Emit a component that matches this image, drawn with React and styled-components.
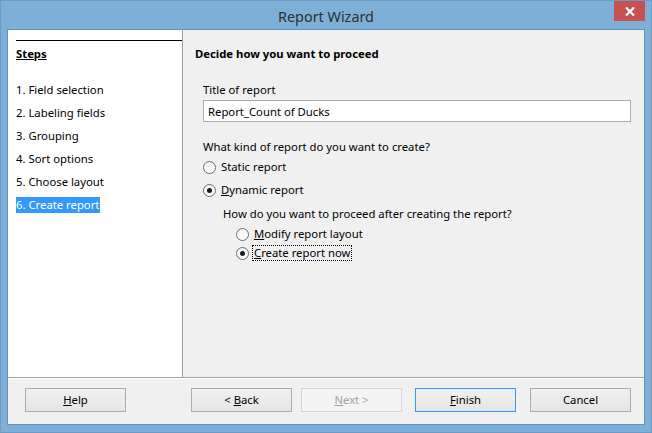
import React from "react";
import styled, { createGlobalStyle } from "styled-components";

const GlobalStyle = createGlobalStyle`
  html, body {
    margin: 0;
    padding: 0;
    background: #7dafd7;
  }
  body {
    font-family: "Noto Sans", "Open Sans", sans-serif;
    font-size: 11.3px;
    color: #000;
  }
`;

const steps = [
  "1. Field selection",
  "2. Labeling fields",
  "3. Grouping",
  "4. Sort options",
  "5. Choose layout",
  "6. Create report",
];

const Window = styled.div`
  box-sizing: border-box;
  width: 652px;
  height: 433px;
  background: #7dafd7;
  border: 1px solid #6b9cc8;
  padding: 0 6px 7px 6px;
  display: flex;
  flex-direction: column;
`;

const TitleBar = styled.div`
  height: 28px;
  display: grid;
  grid-template-columns: 1fr auto 1fr;
  align-items: start;
`;

const Title = styled.div`
  grid-column: 2;
  font-size: 14.4px;
  line-height: 15px;
  padding-top: 8px;
  color: #303030;
`;

const CloseButton = styled.div`
  grid-column: 3;
  justify-self: end;
  width: 31px;
  height: 20px;
  background: #c75050;
  display: flex;
  align-items: center;
  justify-content: center;
`;

const Client = styled.div`
  flex: 1;
  border: 1px solid #6592bd;
  background: #f0f0f0;
  display: flex;
  flex-direction: column;
`;

const Main = styled.div`
  flex: 1;
  display: flex;
  border-bottom: 1px solid #a0a0a0;
  box-shadow: 0 1px 0 #ffffff;
`;

const StepsPanel = styled.div`
  width: 166px;
  background: #fff;
  border-right: 1px solid #a0a0a0;
  padding: 10px 0 0 8px;
`;

const StepsRule = styled.div`
  height: 1px;
  background: #000;
`;

const StepsHeading = styled.div`
  font-weight: bold;
  text-decoration: underline;
  line-height: 16px;
  margin: 5px 0 20px 0;
`;

const StepList = styled.div`
  display: flex;
  flex-direction: column;
  align-items: flex-start;
  gap: 7px;
`;

const Step = styled.div`
  line-height: 16px;
  padding-right: 1px;
  background: ${(p) => (p.$active ? "#3399ff" : "transparent")};
  color: ${(p) => (p.$active ? "#fff" : "#000")};
`;

const Content = styled.div`
  flex: 1;
  padding: 16px 13px 0 12px;
  display: flex;
  flex-direction: column;
  align-items: flex-start;
`;

const Heading = styled.div`
  font-weight: bold;
  line-height: 16px;
  margin-bottom: 20px;
`;

const Label = styled.div`
  line-height: 16px;
  margin-left: ${(p) => p.$indent || 8}px;
  margin-top: ${(p) => p.$top || 0}px;
`;

const TextField = styled.div`
  box-sizing: border-box;
  align-self: stretch;
  margin: 2px 0 0 8px;
  height: 22px;
  background: #fff;
  border: 1px solid #abadb3;
  padding: 0 4px;
  display: flex;
  align-items: center;
`;

const RadioRow = styled.label`
  display: flex;
  align-items: center;
  height: 16px;
  margin-left: ${(p) => p.$indent}px;
  margin-top: ${(p) => p.$top}px;
  gap: 5px;
`;

const Circle = styled.span`
  box-sizing: border-box;
  width: 13px;
  height: 13px;
  border-radius: 50%;
  border: 1px solid #6d6d6d;
  background: linear-gradient(#f4f4f4, #ffffff);
  display: flex;
  align-items: center;
  justify-content: center;
  &::after {
    content: "";
    width: 5px;
    height: 5px;
    border-radius: 50%;
    background: ${(p) => (p.$checked ? "#1a1a1a" : "transparent")};
  }
`;

const RadioText = styled.span`
  line-height: 14px;
  padding: 0 1px;
  border: 1px dotted ${(p) => (p.$focus ? "#000" : "transparent")};
  margin-left: -2px;
`;

const Footer = styled.div`
  height: 46px;
  box-sizing: border-box;
  padding: 10px 13px 0 17px;
  display: flex;
  align-items: flex-start;
`;

const Button = styled.div`
  box-sizing: border-box;
  width: 101px;
  height: 24px;
  margin-left: ${(p) => p.$gap || 0}px;
  border: 1px solid ${(p) => (p.$default ? "#3399ff" : p.$disabled ? "#d6d6d6" : "#acacac")};
  background: ${(p) => (p.$disabled ? "#f4f4f4" : "linear-gradient(#f0f0f0, #e5e5e5)")};
  color: ${(p) => (p.$disabled ? "#a3a3a3" : "#000")};
  display: flex;
  align-items: center;
  justify-content: center;
  line-height: 16px;
`;

const Radio = ({ indent, top, checked, focus, children }) => (
  <RadioRow $indent={indent} $top={top}>
    <Circle $checked={checked} />
    <RadioText $focus={focus}>{children}</RadioText>
  </RadioRow>
);

export default function App() {
  return (
    <>
      <GlobalStyle />
      <Window>
        <TitleBar>
          <Title>Report Wizard</Title>
          <CloseButton>
            <svg width="10" height="9" viewBox="0 0 10 9">
              <path d="M1 0.5 L9 8.5 M9 0.5 L1 8.5" stroke="#fff" strokeWidth="2.2" />
            </svg>
          </CloseButton>
        </TitleBar>
        <Client>
          <Main>
            <StepsPanel>
              <StepsRule />
              <StepsHeading>Steps</StepsHeading>
              <StepList>
                {steps.map((s, i) => (
                  <Step key={s} $active={i === steps.length - 1}>
                    {s}
                  </Step>
                ))}
              </StepList>
            </StepsPanel>
            <Content>
              <Heading>Decide how you want to proceed</Heading>
              <Label>Title of report</Label>
              <TextField>Report_Count of Ducks</TextField>
              <Label $top={17}>What kind of report do you want to create?</Label>
              <Radio indent={8} top={4}>Static report</Radio>
              <Radio indent={8} top={7} checked>
                <u>D</u>ynamic report
              </Radio>
              <Label $indent={28} $top={8}>
                How do you want to proceed after creating the report?
              </Label>
              <Radio indent={41} top={4}>
                <u>M</u>odify report layout
              </Radio>
              <Radio indent={41} top={3} checked focus>
                <u>C</u>reate report now
              </Radio>
            </Content>
          </Main>
          <Footer>
            <Button>
              <span><u>H</u>elp</span>
            </Button>
            <Button $gap={65}>
              <span>&lt; <u>B</u>ack</span>
            </Button>
            <Button $gap={9} $disabled>
              <span><u>N</u>ext &gt;</span>
            </Button>
            <Button $gap={13} $default>
              <span><u>F</u>inish</span>
            </Button>
            <Button $gap={14}>Cancel</Button>
          </Footer>
        </Client>
      </Window>
    </>
  );
}
